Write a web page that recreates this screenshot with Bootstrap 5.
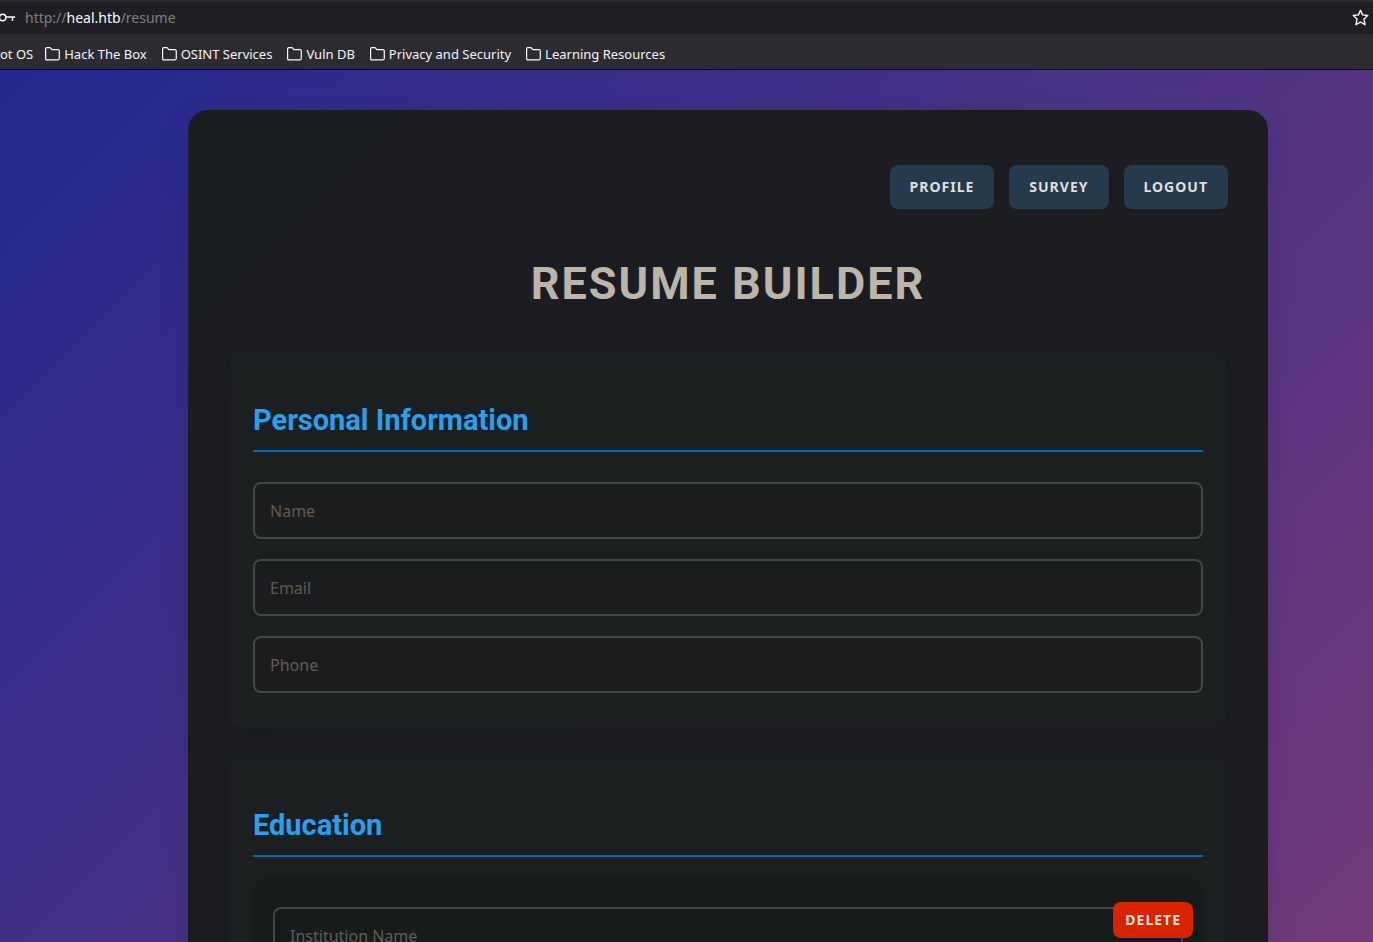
<!DOCTYPE html>
<html lang="en">
<head>
<meta charset="utf-8">
<meta name="viewport" content="width=device-width, initial-scale=1">
<title>Resume Builder</title>
<link href="https://cdn.jsdelivr.net/npm/bootstrap@5.3.0/dist/css/bootstrap.min.css" rel="stylesheet">
<style>
  body { font-family: "Noto Sans", sans-serif; background: #1c1b22; }
  .address-bar { height: 36px; background: #1f1e24; border-top: 2px solid #2b2a31; border-bottom: 2px solid #2b2a31; font-size: 14px; color: #7f7e84; padding: 0 4px 2px 0; gap: 9px; }
  .address-bar a { color: inherit; }
  .address-bar .site { color: #fbfbfe; }
  .address-bar svg, .bookmarks svg { display: block; flex: none; }
  .bookmarks { height: 34px; background: #2d2b32; border-bottom: 1px solid #0d0c12; gap: 15px; font-size: 13px; line-height: 20px; padding-top: 2px; }
  .bookmarks a { color: #f4f4f8; gap: 4px; }
  .bookmarks .scrolled { margin-right: -3px; }
  .stage { background: linear-gradient(135deg, #22298f, #733a7b); padding: 40px 0 0 83px; min-height: 0; }
  .builder { max-width: 1080px; width: 90%; padding: 55px 40px 40px; border-radius: 20px; background: linear-gradient(135deg, #1a1e22 0, #1b1c21 30%, #1e1c20 100%); box-shadow: 0 10px 30px rgba(0,0,0,.12); }
  .top-actions { gap: 15px; margin-bottom: 48px; }
  .btn-action { --bs-btn-color: #e2dfda; --bs-btn-bg: #263a4d; --bs-btn-hover-color: #fff; --bs-btn-hover-bg: #304b64; --bs-btn-border-width: 0; --bs-btn-border-radius: 8px; --bs-btn-padding-x: 20px; --bs-btn-padding-y: 12px; --bs-btn-font-size: 14px; --bs-btn-font-weight: 700; --bs-btn-line-height: 20px; letter-spacing: 1px; }
  .btn-remove { --bs-btn-bg: #d92402; --bs-btn-hover-bg: #b81e02; --bs-btn-padding-x: 12px; --bs-btn-padding-y: 8px; top: 25px; right: 10px; }
  .page-title { font: 700 45px/54px Roboto, sans-serif; letter-spacing: 2px; color: #bdb5a9; margin-bottom: 42px; }
  .panel { background: #1b1f1f; border-radius: 15px; padding: 50px 25px 35px; margin-bottom: 30px; box-shadow: 0 5px 15px rgba(0,0,0,.01); }
  .panel h2 { font: 700 29px/34px Roboto, sans-serif; color: #2a9ff0; border-bottom: 2px solid #0369aa; padding-bottom: 13px; margin-bottom: 30px; }
  .panel h2.tight { margin-bottom: 20px; }
  .fields { gap: 20px; }
  .panel .form-control { height: 57px; border: 2px solid #3f4747; border-radius: 8px; background: #1b1c1e; color: #ddd; padding: 0 15px; font-size: 16px; }
  .panel .form-control::placeholder { color: #615b54; }
  .entry { background: #181b1c; border-radius: 15px; padding: 30px 20px; }
  .panel .entry .form-control { background: #181b1c; }
</style>
</head>
<body>
<svg class="d-none"><symbol id="folder" viewBox="0 0 15 14"><path fill="none" stroke="#fbfbfe" stroke-width="1.2" d="M.6 11.500V1.900Q.6.700 1.800.7h3.200l2 2h6q1.300 0 1.300 1.300v7.600q0 1.200-1.300 1.200H1.800Q.6 12.800.6 11.500z"/></symbol></svg>
<div class="vh-100 d-flex flex-column overflow-hidden">
  <header>
    <div class="address-bar d-flex align-items-center">
      <svg width="16" height="16" viewBox="0 0 16 16" fill="none" stroke="#fbfbfe" stroke-width="1.4"><circle cx="2.700" cy="8.500" r="3.200"/><path d="M6 8h9M12.500 8v4M14.500 7.500v1.200"/></svg>
      <a class="text-decoration-none flex-grow-1" href="#">http://<span class="site">heal.htb</span>/resume</a>
      <button class="btn border-0 p-0" type="button" aria-label="Bookmark this page">
        <svg width="17" height="17" viewBox="0 0 17 17" fill="none" stroke="#fbfbfe" stroke-width="1.4" stroke-linejoin="round"><path d="M8.500 1.300l2.100 4.600 5.100.6-3.700 3.600 1 5.600-4.500-2.700L4 15.700l1-5.600L1.300 6.500l5.100-.6z"/></svg>
      </button>
    </div>
    <nav class="bookmarks d-flex align-items-center text-nowrap overflow-hidden" aria-label="Bookmarks">
      <a class="scrolled text-decoration-none" href="#">ot OS</a>
      <a class="d-flex align-items-center text-decoration-none" href="#"><svg width="15" height="14"><use href="#folder"/></svg>Hack The Box</a>
      <a class="d-flex align-items-center text-decoration-none" href="#"><svg width="15" height="14"><use href="#folder"/></svg>OSINT Services</a>
      <a class="d-flex align-items-center text-decoration-none" href="#"><svg width="15" height="14"><use href="#folder"/></svg>Vuln DB</a>
      <a class="d-flex align-items-center text-decoration-none" href="#"><svg width="15" height="14"><use href="#folder"/></svg>Privacy and Security</a>
      <a class="d-flex align-items-center text-decoration-none" href="#"><svg width="15" height="14"><use href="#folder"/></svg>Learning Resources</a>
    </nav>
  </header>
  <main class="stage flex-grow-1 overflow-hidden">
    <div class="builder mx-auto">
      <div class="top-actions d-flex justify-content-end">
        <button class="btn btn-action" type="button">PROFILE</button>
        <button class="btn btn-action" type="button">SURVEY</button>
        <button class="btn btn-action" type="button">LOGOUT</button>
      </div>
      <h1 class="page-title text-center">RESUME BUILDER</h1>
      <section class="panel">
        <h2>Personal Information</h2>
        <div class="fields d-flex flex-column">
          <input class="form-control" type="text" placeholder="Name" aria-label="Name">
          <input class="form-control" type="email" placeholder="Email" aria-label="Email">
          <input class="form-control" type="tel" placeholder="Phone" aria-label="Phone">
        </div>
      </section>
      <section class="panel">
        <h2 class="tight">Education</h2>
        <div class="entry position-relative">
          <input class="form-control" type="text" placeholder="Institution Name" aria-label="Institution Name">
          <button class="btn btn-action btn-remove position-absolute" type="button">DELETE</button>
        </div>
      </section>
    </div>
  </main>
</div>
<script src="https://cdn.jsdelivr.net/npm/bootstrap@5.3.0/dist/js/bootstrap.bundle.min.js"></script>
</body>
</html>
